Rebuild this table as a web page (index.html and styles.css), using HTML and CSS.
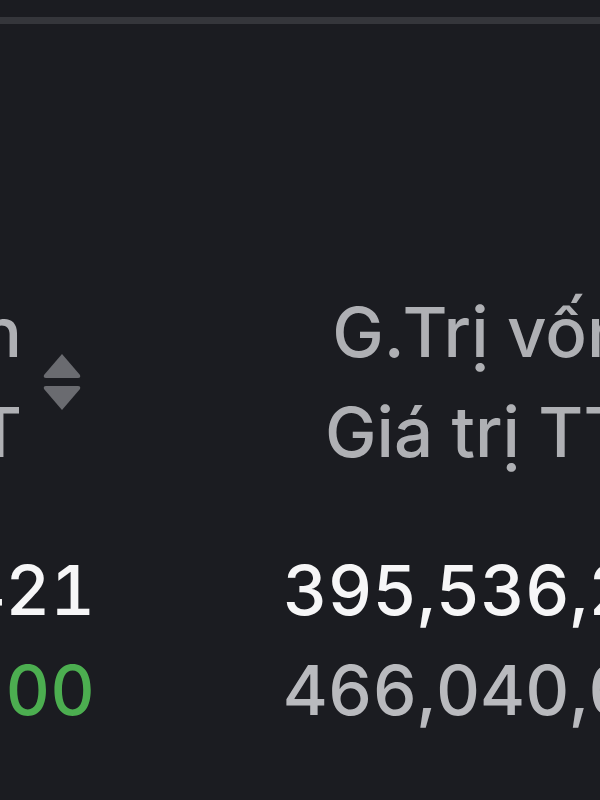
FILE: index.html
```html
<!DOCTYPE html>
<html lang="vi">
  <head>
    <meta charset="UTF-8" />
    <meta name="viewport" content="width=device-width, initial-scale=1.0" />
    <title>Danh mục</title>
    <link rel="stylesheet" href="styles.css">
  </head>
  <body>
    <div class="topbar"></div>
    <div class="table-clip">
      <div class="portfolio">
        <div class="th th-price">
          <div class="th-label">Giá vốn<br>Giá TT</div>
          <span class="sort">
            <svg width="40" height="58" viewBox="0 0 40 58">
              <path d="M20 1 L38 22 Q39 25 36 25 L4 25 Q1 25 2 22 Z" fill="#6a6b70"/>
              <path d="M20 57 L38 36 Q39 33 36 33 L4 33 Q1 33 2 36 Z" fill="#6a6b70"/>
            </svg>
          </span>
        </div>
        <div class="th th-value">
          <div class="th-label">G.Trị vốn<br>Giá trị TT</div>
          <span class="sort">
            <svg width="40" height="58" viewBox="0 0 40 58">
              <path d="M20 1 L38 22 Q39 25 36 25 L4 25 Q1 25 2 22 Z" fill="#6a6b70"/>
              <path d="M20 57 L38 36 Q39 33 36 33 L4 33 Q1 33 2 36 Z" fill="#6a6b70"/>
            </svg>
          </span>
        </div>
        <div class="td td-price">
          <div class="val">26,421</div>
          <div class="val up">31,200</div>
        </div>
        <div class="td td-value">
          <div class="val">395,536,250</div>
          <div class="val muted">466,040,000</div>
        </div>
      </div>
    </div>
  </body>
</html>
```

FILE: styles.css
```css
* {
  box-sizing: border-box;
  margin: 0;
  padding: 0;
}

body {
  font-family: Inter, "Open Sans", sans-serif;
  font-weight: 500;
  background-color: #1b1c21;
  color: #f6f6f7;
  width: 600px;
  height: 800px;
  overflow: hidden;
}

.topbar {
  height: 24px;
  border-top: 17px solid #1b1c21;
  background-color: #35363b;
}

.table-clip {
  width: 600px;
  overflow: hidden;
}

.portfolio {
  display: grid;
  grid-template-columns: 300px 700px;
  margin-left: -205px;
  width: 1000px;
  font-size: 69px;
  line-height: 100px;
}

.th {
  display: flex;
  align-items: center;
  padding-top: 258px;
  color: #afb0b4;
}

.th-label {
  text-align: right;
  white-space: nowrap;
}

.th-price {
  justify-content: flex-end;
  padding-right: 13px;
}

.th-value {
  justify-content: flex-start;
  padding-left: 230px;
}

.sort {
  display: flex;
  margin-left: 20px;
}

.td {
  padding-top: 58px;
  font-variant-numeric: tabular-nums;
}

.td-price {
  text-align: right;
  padding-right: 0;
}

.td-value {
  padding-left: 188px;
}

.val {
  white-space: nowrap;
}

.val.up {
  color: #4cae50;
}

.val.muted {
  color: #b9babe;
}
```
